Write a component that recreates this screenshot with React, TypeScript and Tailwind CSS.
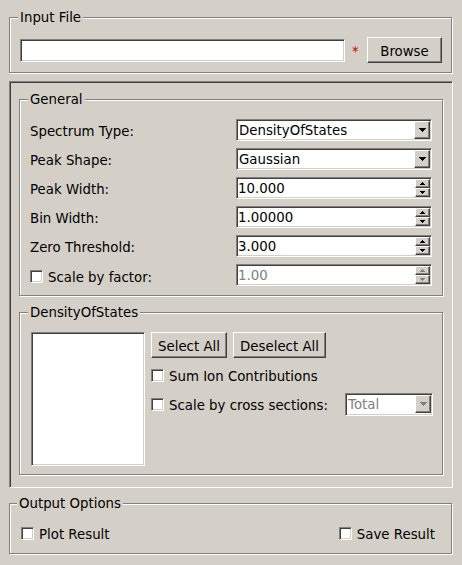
import React from "react";

const sunken =
  "border border-t-[#808080] border-l-[#808080] border-r-white border-b-white shadow-[inset_1px_1px_0_#404040,inset_-1px_-1px_0_#d4d0c8]";
const raised =
  "border border-t-white border-l-white border-r-[#404040] border-b-[#404040] shadow-[inset_-1px_-1px_0_#808080]";

function Group({
  title,
  className = "",
  left = "left-[8px]",
  children,
}: {
  title: string;
  className?: string;
  left?: string;
  children?: React.ReactNode;
}) {
  return (
    <div
      className={`relative border border-[#808080] shadow-[inset_1px_1px_0_#fff,1px_1px_0_#fff] ${className}`}
    >
      <span
        className={`absolute -top-[8px] ${left} bg-[#d4d0c8] px-[2px] leading-[15px] whitespace-nowrap`}
      >
        {title}
      </span>
      {children}
    </div>
  );
}

function DownArrow({ color = "#000" }: { color?: string }) {
  return (
    <svg width="7" height="4" viewBox="0 0 7 4" shapeRendering="crispEdges">
      <rect x="0" y="0" width="7" height="1" fill={color} />
      <rect x="1" y="1" width="5" height="1" fill={color} />
      <rect x="2" y="2" width="3" height="1" fill={color} />
      <rect x="3" y="3" width="1" height="1" fill={color} />
    </svg>
  );
}

function SmallArrow({ up, color = "#000" }: { up?: boolean; color?: string }) {
  return (
    <svg width="5" height="3" viewBox="0 0 5 3" shapeRendering="crispEdges">
      {up ? (
        <>
          <rect x="2" y="0" width="1" height="1" fill={color} />
          <rect x="1" y="1" width="3" height="1" fill={color} />
          <rect x="0" y="2" width="5" height="1" fill={color} />
        </>
      ) : (
        <>
          <rect x="0" y="0" width="5" height="1" fill={color} />
          <rect x="1" y="1" width="3" height="1" fill={color} />
          <rect x="2" y="2" width="1" height="1" fill={color} />
        </>
      )}
    </svg>
  );
}

function Combo({
  value,
  disabled,
  className = "",
}: {
  value: string;
  disabled?: boolean;
  className?: string;
}) {
  return (
    <div className={`${sunken} flex h-[22px] bg-white p-[1px] ${className}`}>
      <span
        className={`flex-1 pl-[1px] pt-[1px] leading-[17px] whitespace-nowrap overflow-hidden ${
          disabled ? "text-[#808080]" : "text-black"
        }`}
      >
        {value}
      </span>
      <div
        className={`${raised} bg-[#d4d0c8] w-[16px] h-[18px] flex items-center justify-center`}
      >
        <DownArrow color={disabled ? "#808080" : "#000"} />
      </div>
    </div>
  );
}

function Spin({
  value,
  disabled,
  className = "",
}: {
  value: string;
  disabled?: boolean;
  className?: string;
}) {
  return (
    <div className={`${sunken} flex h-[22px] bg-white p-[1px] ${className}`}>
      <span
        className={`flex-1 pt-[1px] leading-[17px] whitespace-nowrap ${
          disabled ? "text-[#808080]" : "text-black"
        }`}
      >
        {value}
      </span>
      <div className="flex flex-col w-[15px] h-[18px]">
        <div
          className={`${raised} bg-[#d4d0c8] h-[9px] flex items-center justify-center`}
        >
          <SmallArrow up color={disabled ? "#808080" : "#000"} />
        </div>
        <div
          className={`${raised} bg-[#d4d0c8] h-[9px] flex items-center justify-center`}
        >
          <SmallArrow color={disabled ? "#808080" : "#000"} />
        </div>
      </div>
    </div>
  );
}

function CheckBox() {
  return <div className={`${sunken} w-[13px] h-[13px] bg-white shrink-0`} />;
}

function Check({ label }: { label: string }) {
  return (
    <div className="flex items-center gap-[5px]">
      <CheckBox />
      <span className="leading-[15px] pt-[2px] whitespace-nowrap">{label}</span>
    </div>
  );
}

function Button({ label, className = "" }: { label: string; className?: string }) {
  return (
    <div
      className={`${raised} bg-[#d4d0c8] h-[26px] flex items-center justify-center leading-[15px] pt-[2px] whitespace-nowrap ${className}`}
    >
      {label}
    </div>
  );
}

function Row({ label, children }: { label: React.ReactNode; children: React.ReactNode }) {
  return (
    <div className="flex items-center justify-between h-[22px]">
      <div className="leading-[15px] pt-[2px] whitespace-nowrap">{label}</div>
      {children}
    </div>
  );
}

export default function App() {
  return (
    <div
      className="w-[462px] h-[565px] bg-[#d4d0c8] text-black text-[13.33px] pt-[17px] pl-[9px] pr-[10px] overflow-hidden"
      style={{ fontFamily: '"DejaVu Sans", "Liberation Sans", sans-serif' }}
    >
      <Group title="Input File" className="h-[56px] pt-[19px] pl-[10px] pr-[9px]">
        <div className="flex items-center h-[26px]">
          <div className={`${sunken} bg-white w-[325px] h-[23px]`} />
          <span className="text-[#c00000] ml-[7px] leading-[15px] mt-[2px]">*</span>
          <Button label="Browse" className="ml-auto w-[75px]" />
        </div>
      </Group>

      <div className={`${sunken} mt-[8px] w-[444px] h-[407px] pt-[17px] pl-[9px] pr-[9px]`}>
        <Group title="General" className="h-[197px] pt-[19px] pl-[10px] pr-[10px]">
          <div className="flex flex-col gap-[7px]">
            <Row label="Spectrum Type:">
              <Combo value="DensityOfStates" className="w-[196px]" />
            </Row>
            <Row label="Peak Shape:">
              <Combo value="Gaussian" className="w-[196px]" />
            </Row>
            <Row label="Peak Width:">
              <Spin value="10.000" className="w-[196px]" />
            </Row>
            <Row label="Bin Width:">
              <Spin value="1.00000" className="w-[196px]" />
            </Row>
            <Row label="Zero Threshold:">
              <Spin value="3.000" className="w-[196px]" />
            </Row>
            <Row label={<Check label="Scale by factor:" />}>
              <Spin value="1.00" disabled className="w-[196px]" />
            </Row>
          </div>
        </Group>

        <Group
          title="DensityOfStates"
          className="mt-[16px] h-[163px] pt-[19px] pl-[11px] pr-[9px]"
        >
          <div className="flex gap-[6px]">
            <div className={`${sunken} bg-white w-[114px] h-[134px] shrink-0`} />
            <div className="flex-1 flex flex-col">
              <div className="flex gap-[6px]">
                <Button label="Select All" className="w-[76px]" />
                <Button label="Deselect All" className="w-[93px]" />
              </div>
              <div className="mt-[6px] h-[22px] flex items-center">
                <Check label="Sum Ion Contributions" />
              </div>
              <div className="mt-[7px] h-[22px] flex items-center justify-between">
                <Check label="Scale by cross sections:" />
                <Combo value="Total" disabled className="w-[88px] h-[23px]" />
              </div>
            </div>
          </div>
        </Group>
      </div>

      <Group
        title="Output Options"
        left="left-[7px]"
        className="mt-[15px] h-[51px] pt-[21px] pl-[11px] pr-[16px]"
      >
        <div className="flex items-center justify-between h-[17px]">
          <Check label="Plot Result" />
          <Check label="Save Result" />
        </div>
      </Group>
    </div>
  );
}
